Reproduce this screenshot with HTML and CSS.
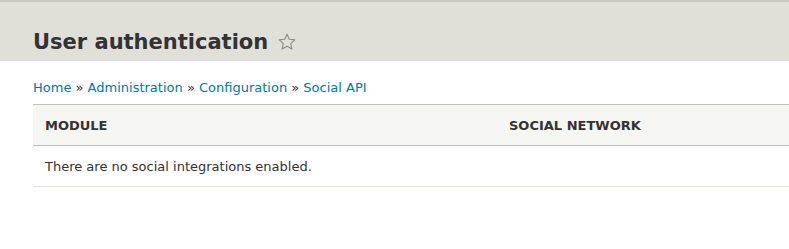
FILE: index.html
```html
<!DOCTYPE html>
<html lang="en">
<head>
    <meta charset="UTF-8">
    <title>User authentication</title>
    <link rel="stylesheet" href="styles.css">
</head>
<body>
    <div class="page-header">
        <h1 class="page-title">User authentication
            <a class="shortcut" href="#" title="Add to Default shortcuts">
                <svg width="20" height="20" viewBox="0 0 20 20"><path d="M10 2.2 L12.3 7.3 L17.8 7.9 L13.7 11.6 L14.9 17.1 L10 14.3 L5.1 17.1 L6.3 11.6 L2.2 7.9 L7.7 7.3 Z" fill="none" stroke="#8c8c7e" stroke-width="1.1" stroke-linejoin="round"/></svg>
            </a>
        </h1>
    </div>

    <div class="content">
        <nav class="breadcrumb">
            <a href="#">Home</a> &raquo; <a href="#">Administration</a> &raquo; <a href="#">Configuration</a> &raquo; <a href="#">Social API</a>
        </nav>

        <table class="integrations">
            <thead>
                <tr>
                    <th class="col-module">Module</th>
                    <th>Social Network</th>
                </tr>
            </thead>
            <tbody>
                <tr>
                    <td colspan="2">There are no social integrations enabled.</td>
                </tr>
            </tbody>
        </table>
    </div>
</body>
</html>
```

FILE: styles.css
```css
* {
    margin: 0;
    padding: 0;
    box-sizing: border-box;
}

body {
    font-family: "DejaVu Sans", sans-serif;
    font-size: 13px;
    color: #333;
    background: #fff;
    overflow: hidden;
}

a {
    color: #0074bd;
    text-decoration: none;
}

/* Grey title band */
.page-header {
    background: #e0e0d8;
    border-top: 2px solid #c9c9c1;
    height: 61px;
    padding: 26px 0 0 33px;
}

.page-title {
    display: flex;
    align-items: center;
    gap: 9px;
    font-size: 21px;
    font-weight: 700;
    line-height: 28px;
    color: #333;
}

.shortcut {
    display: flex;
}

.content {
    padding-left: 33px;
}

.breadcrumb {
    line-height: 20px;
    padding: 17px 0 6px;
    color: #333;
}

/* Table */
.integrations {
    width: 100%;
    border-collapse: collapse;
}

.integrations th {
    background: #f5f5f2;
    border-top: 1px solid #bfbfba;
    border-bottom: 1px solid #bfbfba;
    text-align: left;
    text-transform: uppercase;
    font-size: 13px;
    font-weight: 700;
    padding: 0 12px;
    height: 41px;
}

.integrations .col-module {
    width: 464px;
}

.integrations td {
    padding: 0 12px;
    height: 41px;
    border-bottom: 1px solid #e6e4df;
}
```
